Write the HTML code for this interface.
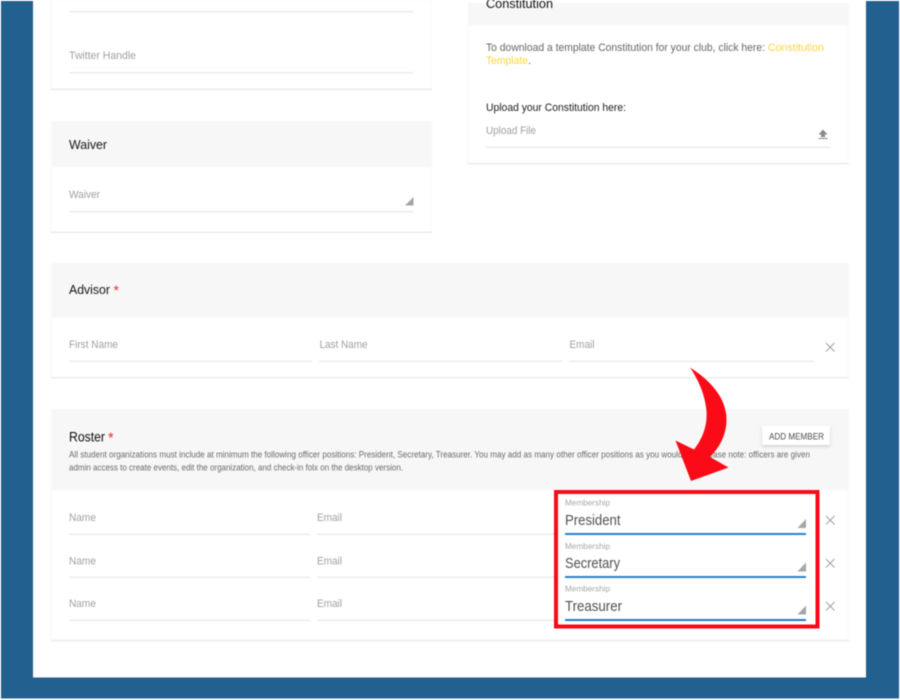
<!DOCTYPE html>
<html><head><meta charset="utf-8"><style>
html,body{margin:0;padding:0;width:900px;height:700px;overflow:hidden;background:#fff}
svg{display:block;filter:blur(.4px)}
text{font-family:"Liberation Sans",sans-serif;white-space:pre}
.p{font-size:11.3px;fill:#a0a0a0}
.t{font-size:13px;fill:#141414}
.s{font-size:8.8px;fill:#6a6a6a}
.l{font-size:8.7px;fill:#a8a8a8}
.v{font-size:15px;fill:#505050}
.b{font-size:11.3px;fill:#666}
.x{stroke:#a0a0a0;stroke-width:1;fill:none}
</style></head><body>
<svg width="900" height="700" viewBox="0 0 900 700" xmlns="http://www.w3.org/2000/svg">
<rect width="900" height="700" fill="#fff"/>
<rect x="1" y="1" width="898" height="697.500" fill="#22608f"/>
<rect x="33" y="0" width="833" height="677.500" fill="#fff"/>

<!-- left top card -->
<rect x="51" y="0" width="380" height="90" fill="#fff" stroke="#f8f8f8"/>
<rect x="51" y="88.500" width="381" height="1.500" fill="#ececec"/>
<rect x="69" y="11" width="344" height="1.500" fill="#ececec"/>
<text class="p" x="69" y="59" textLength="67" lengthAdjust="spacingAndGlyphs">Twitter Handle</text>
<rect x="69" y="72" width="344" height="1.500" fill="#ececec"/>

<!-- waiver -->
<rect x="51" y="167" width="380" height="65" fill="#fff" stroke="#f8f8f8"/>
<rect x="51" y="121" width="381" height="46" fill="#f7f7f7"/>
<rect x="51" y="231.500" width="381" height="1.500" fill="#ececec"/>
<text class="t" x="69" y="149" textLength="38" lengthAdjust="spacingAndGlyphs">Waiver</text>
<text class="p" x="69" y="198" textLength="31" lengthAdjust="spacingAndGlyphs">Waiver</text>
<rect x="69" y="211" width="344" height="1.500" fill="#ececec"/>
<path d="M413.500 197V205.500H405Z" fill="#a5a5a5"/>

<!-- constitution -->
<rect x="468" y="25" width="380" height="139" fill="#fff" stroke="#f8f8f8"/>
<rect x="468" y="3" width="381" height="22" fill="#f7f7f7"/>
<rect x="468" y="163" width="381" height="1.500" fill="#ececec"/>
<text class="t" x="486" y="8" textLength="67" lengthAdjust="spacingAndGlyphs">Constitution</text>
<text class="b" x="486" y="51" textLength="279" lengthAdjust="spacingAndGlyphs">To download a template Constitution for your club, click here:</text>
<text class="b" x="768" y="51" textLength="56" lengthAdjust="spacingAndGlyphs" style="fill:#fdd53f">Constitution</text>
<text class="b" x="486" y="64" textLength="42" lengthAdjust="spacingAndGlyphs" style="fill:#fdd53f">Template</text>
<text class="b" x="528" y="64">.</text>
<text x="486" y="111" textLength="140" lengthAdjust="spacingAndGlyphs" style="font-size:11.3px;fill:#1c1c1c">Upload your Constitution here:</text>
<text class="p" x="486" y="134" textLength="50" lengthAdjust="spacingAndGlyphs">Upload File</text>
<path d="M823 129.500L827.500 134.500H825V137H821V134.500H818.500Z" fill="#8a8a8a"/>
<rect x="818.500" y="138" width="9" height="1" fill="#8a8a8a"/>
<rect x="486" y="146.500" width="344" height="1.500" fill="#ececec"/>

<!-- advisor -->
<rect x="51" y="317" width="797" height="61" fill="#fff" stroke="#f8f8f8"/>
<rect x="51" y="263" width="798" height="54" fill="#f7f7f7"/>
<rect x="51" y="377" width="798" height="1.500" fill="#ececec"/>
<text class="t" x="69" y="294" textLength="41" lengthAdjust="spacingAndGlyphs">Advisor</text>
<text x="113.500" y="295" style="font-size:14px;fill:#f4252c">*</text>
<text class="p" x="69" y="348" textLength="49" lengthAdjust="spacingAndGlyphs">First Name</text>
<text class="p" x="319.500" y="348" textLength="48" lengthAdjust="spacingAndGlyphs">Last Name</text>
<text class="p" x="569.500" y="348" textLength="25" lengthAdjust="spacingAndGlyphs">Email</text>
<rect x="69" y="360.500" width="243" height="1.500" fill="#ececec"/>
<rect x="319" y="360.500" width="243" height="1.500" fill="#ececec"/>
<rect x="569" y="360.500" width="245" height="1.500" fill="#ececec"/>
<path class="x" d="M826 343L834.500 351.500M834.500 343L826 351.500"/>

<!-- roster -->
<rect x="51" y="490" width="797" height="150" fill="#fff" stroke="#f8f8f8"/>
<rect x="51" y="409" width="798" height="81" fill="#f7f7f7"/>
<rect x="51" y="640" width="798" height="1.500" fill="#ececec"/>
<text x="69" y="441.500" textLength="36" lengthAdjust="spacingAndGlyphs" style="font-size:13.500px;fill:#0c0c0c">Roster</text>
<text x="108" y="442.500" style="font-size:14.500px;fill:#f4252c">*</text>
<text class="s" x="69" y="457.500" textLength="741" lengthAdjust="spacingAndGlyphs">All student organizations must include at minimum the following officer positions: President, Secretary, Treasurer. You may add as many other officer positions as you would like. Please note: officers are given</text>
<text class="s" x="69" y="470.500" textLength="334" lengthAdjust="spacingAndGlyphs">admin access to create events, edit the organization, and check-in folx on the desktop version.</text>

<rect x="762" y="426" width="68" height="19" rx="1" fill="#000" opacity=".16" transform="translate(0 1.500)" style="filter:blur(1.500px)"/>
<rect x="762" y="426" width="68" height="19" rx="1" fill="#fff"/>
<text x="769" y="439.300" textLength="55" lengthAdjust="spacingAndGlyphs" style="font-size:9.500px;fill:#4c4c4c">ADD MEMBER</text>

<text class="p" x="69" y="521" textLength="27" lengthAdjust="spacingAndGlyphs">Name</text>
<text class="p" x="317" y="521" textLength="25" lengthAdjust="spacingAndGlyphs">Email</text>
<rect x="69" y="533.500" width="241" height="1.500" fill="#ececec"/>
<rect x="317" y="533.500" width="238" height="1.500" fill="#ececec"/>
<text class="p" x="69" y="564.500" textLength="27" lengthAdjust="spacingAndGlyphs">Name</text>
<text class="p" x="317" y="564.500" textLength="25" lengthAdjust="spacingAndGlyphs">Email</text>
<rect x="69" y="576.500" width="241" height="1.500" fill="#ececec"/>
<rect x="317" y="576.500" width="238" height="1.500" fill="#ececec"/>
<text class="p" x="69" y="607" textLength="27" lengthAdjust="spacingAndGlyphs">Name</text>
<text class="p" x="317" y="607" textLength="25" lengthAdjust="spacingAndGlyphs">Email</text>
<rect x="69" y="619.500" width="241" height="1.500" fill="#ececec"/>
<rect x="317" y="619.500" width="238" height="1.500" fill="#ececec"/>

<text class="l" x="565" y="505.500" textLength="45" lengthAdjust="spacingAndGlyphs">Membership</text>
<text class="v" x="565" y="525" textLength="55.500" lengthAdjust="spacingAndGlyphs">President</text>
<rect x="565" y="533" width="241" height="2" fill="#2a80d0"/>
<path d="M806 519V528H797.500Z" fill="#a5a5a5"/>
<text class="l" x="565" y="549" textLength="45" lengthAdjust="spacingAndGlyphs">Membership</text>
<text class="v" x="565" y="568" textLength="55" lengthAdjust="spacingAndGlyphs">Secretary</text>
<rect x="565" y="576" width="241" height="2" fill="#2a80d0"/>
<path d="M806 562.500V571.500H797.500Z" fill="#a5a5a5"/>
<text class="l" x="565" y="591.500" textLength="45" lengthAdjust="spacingAndGlyphs">Membership</text>
<text class="v" x="565" y="611" textLength="57" lengthAdjust="spacingAndGlyphs">Treasurer</text>
<rect x="565" y="619" width="241" height="2" fill="#1e78cf"/>
<path d="M806 605.500V614.500H797.500Z" fill="#a5a5a5"/>

<path class="x" d="M826 516L834.500 524.500M834.500 516L826 524.500"/>
<path class="x" d="M826 559L834.500 567.500M834.500 559L826 567.500"/>
<path class="x" d="M826 602L834.500 610.500M834.500 602L826 610.500"/>

<rect x="556" y="492" width="261.500" height="134.500" fill="none" stroke="#f80a18" stroke-width="4"/>

<!-- arrow -->
<path d="M690 367.500C708 379 723 394 726 413C728.500 431 721 446 710 457L728.500 467.500L691 481L675.500 440.500L694 449.500C703 438 707.500 425 706.500 411C705 395 699 381 690 367.500Z" fill="#fb0a17"/>
</svg>
</body></html>
